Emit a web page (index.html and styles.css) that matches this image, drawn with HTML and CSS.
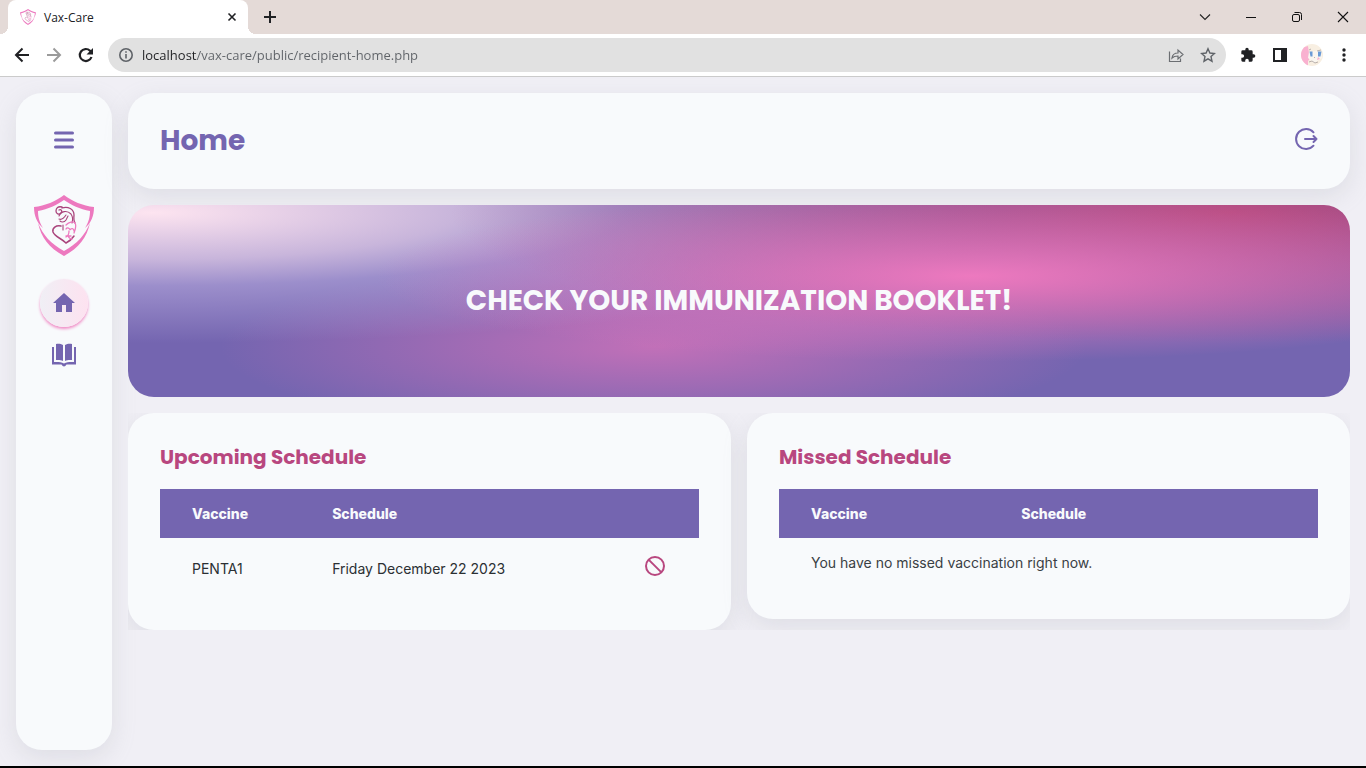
FILE: index.html
```
<!DOCTYPE html>
<html lang="en">
<head>
<meta charset="utf-8">
<title>Vax-Care</title>
<link rel="stylesheet" href="styles.css">
</head>
<body>
<svg class="defs" aria-hidden="true">
  <symbol id="logo" viewBox="0 0 60 61">
    <g fill="none" stroke-linecap="round">
      <path fill="#ed79bf" d="M30 0C22 6 11 11 0 12c0 9 3 16 9 21C5 27 4 21 4 16c10-2 19-6 26-11 7 5 16 9 26 11 0 5-1 11-5 17 6-5 9-12 9-21C49 11 38 6 30 0Z"/>
      <path fill="#ed79bf" d="M4 28c3 14 11 25 26 33 15-8 23-19 26-33-5 12-13 21-26 28C17 49 9 40 4 28Z"/>
      <path stroke="#a9437b" stroke-width="1.300" d="M28 12c-4-1-6 1-6 4s3 4 5 2 0-4-2-3M28 13c6-2 12 1 12 7 0 3-1 5 1 8"/>
      <path stroke="#a9437b" stroke-width="1.100" d="M25 21c2-5 8-6 12-2 2 3 2 6 1 9m-13-4c2 1 5-1 7-4m-6 6c1 1 4 2 6-1l2-4m-5 9v5"/>
      <path stroke="#a9437b" stroke-width="1.500" d="M27 31c-5-1-9 2-8 6 2 5 8 6 13 11 4-2 6-4 8-7"/>
      <path stroke="#ed79bf" stroke-width="1.300" d="M32 30c3-3 7-4 9-2 2 3 0 7-1 10M32 34c1-2 4-1 4 1 1-2 4-2 4 1M32 42c2-1 3-3 3-6m-3 5h5m-3 0c1 2 2 3 4 3"/>
    </g>
  </symbol>
</svg>

<header class="browser">
  <div class="tabstrip">
    <div class="tab">
      <svg class="tab-logo"><use href="#logo"/></svg>
      <span class="tab-title">Vax-Care</span>
      <button class="plain" aria-label="Close tab"><svg width="16" height="16" viewBox="0 0 16 16" stroke="#202124" stroke-width="1.600"><path d="m4.500 4.500 7 7m0-7-7 7"/></svg></button>
    </div>
    <button class="plain new-tab" aria-label="New tab"><svg width="16" height="16" viewBox="0 0 16 16" stroke="#202124" stroke-width="2"><path d="M2 8h12M8 2v12"/></svg></button>
    <div class="window-controls">
      <button class="plain" aria-label="Search tabs"><svg width="12" height="12" viewBox="0 0 12 12" fill="none" stroke="#222" stroke-width="1.100"><path d="m1 3.500 5 5 5-5"/></svg></button>
      <button class="plain" aria-label="Minimize"><svg width="12" height="12" viewBox="0 0 12 12" stroke="#111"><path d="M1 6.500h10"/></svg></button>
      <button class="plain" aria-label="Restore"><svg width="12" height="12" viewBox="0 0 12 12" fill="none" stroke="#111"><rect x="1.500" y="3.500" width="7" height="7" rx="1.500"/><path d="M3.500 1.500H8.500a2 2 0 0 1 2 2V9"/></svg></button>
      <button class="plain" aria-label="Close"><svg width="12" height="12" viewBox="0 0 12 12" stroke="#111" stroke-width="1.100"><path d="m1 1 10 10M11 1 1 11"/></svg></button>
    </div>
  </div>
  <div class="toolbar">
    <button class="plain" aria-label="Back"><svg width="16" height="16" viewBox="0 0 16 16" fill="none" stroke="#202124" stroke-width="2"><path d="M15 8H2m6.500-6.500L2 8l6.500 6.500"/></svg></button>
    <button class="plain" aria-label="Forward"><svg width="16" height="16" viewBox="0 0 16 16" fill="none" stroke="#9b9b9b" stroke-width="2"><path d="M1 8h13M7.500 1.500 14 8l-6.500 6.500"/></svg></button>
    <button class="plain" aria-label="Reload"><svg width="16" height="16" viewBox="0 0 16 16" fill="none" stroke="#202124" stroke-width="2.200"><path d="M13.500 10A6 6 0 1 1 12 3.700L13.500 5"/><path fill="#202124" stroke="none" d="M15 1v6.500H8.500Z"/></svg></button>
    <div class="address">
      <svg width="16" height="16" viewBox="0 0 16 16" fill="none" stroke="#5f6368" stroke-width="1.600"><circle cx="8" cy="8" r="6.200"/><path d="M8 7v4.500M8 4.200v1.600"/></svg>
      <input class="url" type="text" aria-label="Address" value="localhost/vax-care/public/recipient-home.php">
      <button class="plain" aria-label="Share"><svg width="16" height="16" viewBox="0 0 16 16" fill="none" stroke="#6b6e72" stroke-width="1.200"><path d="M1.500 4.500v10h11v-3M4 11c.5-3.500 3-5 6-5V3l5 4.500-5 4.500V9c-2.500 0-4.500.5-6 2Z"/></svg></button>
      <button class="plain" aria-label="Bookmark"><svg width="16" height="16" viewBox="0 0 16 16" fill="none" stroke="#5f6368" stroke-width="1.400"><path d="m8 1.700 1.900 4.300 4.600.5-3.500 3.100 1 4.600L8 11.800l-4 2.400 1-4.600-3.500-3.100 4.600-.5Z"/></svg></button>
    </div>
    <button class="plain" aria-label="Extensions"><svg width="16" height="16" viewBox="0 0 24 24" fill="#202124"><path d="M20.500 11H19V7a2 2 0 0 0-2-2h-4V3.500a2.500 2.500 0 0 0-5 0V5H4a2 2 0 0 0-2 2v3.800h1.500a2.700 2.700 0 0 1 0 5.400H2V20a2 2 0 0 0 2 2h3.800v-1.500a2.700 2.700 0 0 1 5.400 0V22H17a2 2 0 0 0 2-2v-4h1.500a2.500 2.500 0 0 0 0-5Z"/></svg></button>
    <button class="plain" aria-label="Side panel"><svg width="16" height="16" viewBox="0 0 16 16"><path fill="#202124" fill-rule="evenodd" d="M1 1h14v14H1ZM3 3v10h6V3Z"/></svg></button>
    <button class="plain profile" aria-label="Profile"><svg width="22" height="22" viewBox="0 0 22 22"><defs><clipPath id="round"><circle cx="11" cy="11" r="11"/></clipPath></defs><g clip-path="url(#round)"><path fill="#f8efe2" d="M0 0h22v22H0z"/><path fill="#f9b1d0" d="M0 4l7-2 1 7 3 3-4 5v5H0z"/><path fill="#faf6f0" d="M8 8l12-2 1 8-8 5-6-5z"/><path fill="#f9b1d0" d="m17 13 2 2-3 1z"/><path fill="#6a9ad6" d="M8.500 7.500h3v5h-2zM17 7.500h3.500l-1 5H17z"/><path fill="none" stroke="#8d8585" stroke-width=".6" d="M8 6l2-1m6 2 4-1m-12 12 3-1 3 2 3-1m-4-5 1 1"/></g></svg></button>
    <button class="plain" aria-label="Menu"><svg width="16" height="16" viewBox="0 0 16 16" fill="#202124"><circle cx="8" cy="3" r="1.700"/><circle cx="8" cy="8" r="1.700"/><circle cx="8" cy="13" r="1.700"/></svg></button>
  </div>
</header>

<div class="app">
  <nav class="sidebar card" aria-label="Main">
    <button class="plain menu-toggle" aria-label="Toggle menu"><svg width="20" height="18" viewBox="0 0 20 18" stroke="#7465b0" stroke-width="3" stroke-linecap="round"><path d="M1.500 2h17M1.500 9h17M1.500 16h17"/></svg></button>
    <svg class="brand" role="img" aria-label="Vax-Care"><use href="#logo"/></svg>
    <div class="nav-links">
      <a class="nav-link active" href="#home" aria-label="Home"><svg width="24" height="24" viewBox="0 0 24 24" fill="#7465b0"><path d="M12 2 1 12h3v9h6v-7h4v7h6v-9h3Z"/></svg></a>
      <a class="nav-link" href="#booklet" aria-label="Booklet"><svg width="24" height="24" viewBox="0 0 24 24" fill="#7465b0"><path d="M4 1c3-.500 5 0 7 1v16c-2-1-4-1.300-7-1ZM13 2c2-1 4-1.500 7-1v16c-3-.300-5 0-7 1Z"/><path d="M0 4h2v15c4-.300 7 0 10 1.500C15 19 18 18.700 22 19V4h2v17.500h-9.500c-.8 1.300-1.500 2-2.500 2s-1.700-.700-2.500-2H0Z"/></svg></a>
    </div>
  </nav>

  <main class="content">
    <div class="page-header card">
      <h1>Home</h1>
      <button class="plain logout" aria-label="Log out"><svg width="24" height="24" viewBox="0 0 24 24" fill="none" stroke="#7465b0" stroke-width="2" stroke-linecap="round" stroke-linejoin="round"><path d="M19.500 5.300A10 10 0 1 0 19.500 18.700M11 12h11.500M19.500 9l3 3-3 3"/></svg></button>
    </div>
    <a class="banner" href="#booklet">CHECK YOUR IMMUNIZATION BOOKLET!</a>
    <div class="schedules">
      <section class="panel card">
        <h2>Upcoming Schedule</h2>
        <table class="upcoming">
          <colgroup><col class="col-vaccine"><col><col class="col-action"></colgroup>
          <thead><tr><th scope="col">Vaccine</th><th scope="col">Schedule</th><th scope="col"></th></tr></thead>
          <tbody><tr><td>PENTA1</td><td>Friday December 22 2023</td><td class="action"><button class="plain" aria-label="Cancel"><svg width="24" height="24" viewBox="0 0 24 24" fill="none" stroke="#b8477f" stroke-width="2"><circle cx="12" cy="12" r="9"/><path d="m5.600 5.600 12.800 12.800"/></svg></button></td></tr></tbody>
        </table>
      </section>
      <section class="panel card">
        <h2>Missed Schedule</h2>
        <table class="missed">
          <colgroup><col class="col-vaccine"><col></colgroup>
          <thead><tr><th scope="col">Vaccine</th><th scope="col">Schedule</th></tr></thead>
          <tbody><tr><td class="empty" colspan="2">You have no missed vaccination right now.</td></tr></tbody>
        </table>
      </section>
    </div>
  </main>
</div>
</body>
</html>
```
FILE: styles.css
```
* { box-sizing: border-box; }

body {
  margin: 0;
  min-height: 100vh;
  display: flex;
  flex-direction: column;
  background: #f0eff5;
  border-bottom: 2px solid #000;
  font-family: Inter, "Liberation Sans", sans-serif;
  font-size: 14px;
  color: #2b2f33;
}

.defs { display: none; }
svg { display: block; flex: none; }

.plain {
  display: flex;
  align-items: center;
  justify-content: center;
  padding: 0;
  border: 0;
  background: none;
  cursor: pointer;
}

/* Browser frame */
.browser { font-family: "Segoe UI", "Open Sans", sans-serif; }

.tabstrip {
  display: flex;
  align-items: center;
  height: 34px;
  padding-left: 8px;
  background: #e4dad7;
}

.tab {
  position: relative;
  display: flex;
  align-items: center;
  gap: 8px;
  width: 240px;
  height: 34px;
  padding: 0 8px 0 12px;
  border-radius: 8px 8px 0 0;
  background: #fff;
}

.tab::before,
.tab::after {
  content: "";
  position: absolute;
  bottom: 0;
  width: 8px;
  height: 8px;
}
.tab::before { left: -8px; background: radial-gradient(circle at 0 0, transparent 8px, #fff 8px); }
.tab::after { right: -8px; background: radial-gradient(circle at 100% 0, transparent 8px, #fff 8px); }

.tab-logo { width: 16px; height: 16px; }
.tab-title { flex: 1; font-size: 12px; color: #202124; }
.new-tab { margin-left: 14px; }

.window-controls { display: flex; margin-left: auto; height: 28px; }
.window-controls .plain { width: 46px; }

.toolbar {
  display: flex;
  align-items: center;
  gap: 16px;
  height: 43px;
  padding: 0 14px;
  background: #fff;
  border-bottom: 1px solid #cbcbcb;
}

.profile { margin: 0 -3px; }

.address {
  flex: 1;
  display: flex;
  align-items: center;
  gap: 16px;
  height: 34px;
  padding: 0 10px;
  margin: 0 -2px;
  border-radius: 17px;
  background: #e1e1e1;
}

.url {
  flex: 1;
  min-width: 0;
  margin-left: -8px;
  padding: 0;
  border: 0;
  outline: 0;
  font: 13px "Segoe UI", "Open Sans", sans-serif;
  color: transparent;
  background: linear-gradient(90deg, #202124 55px, #5f6368 55px);
  -webkit-background-clip: text;
  background-clip: text;
}

/* Application */
.app {
  flex: 1;
  display: flex;
  gap: 16px;
  padding: 16px;
}

.card {
  border-radius: 26px;
  background: #f8fafc;
  box-shadow: 0 8px 24px rgba(149, 157, 165, 0.2);
}

.sidebar {
  flex: none;
  display: flex;
  flex-direction: column;
  align-items: center;
  width: 96px;
  padding: 32px 16px;
}

.menu-toggle { width: 32px; height: 30px; }
.brand { width: 60px; height: 61px; margin: 40px 0 23px; }

.nav-links { display: grid; gap: 4px; }

.nav-link {
  display: grid;
  place-items: center;
  width: 48px;
  height: 48px;
  border-radius: 50%;
}

.nav-link.active {
  background: linear-gradient(90deg, #f0eff5, #fde2f0);
  box-shadow: 0 2px 3px #f08cc6;
}

.content {
  flex: 1;
  min-width: 0;
  display: flex;
  flex-direction: column;
  gap: 16px;
}

.page-header {
  display: flex;
  align-items: center;
  justify-content: space-between;
  height: 96px;
  padding: 0 32px;
}

.logout { padding-bottom: 4px; }

h1, h2, .banner { font-family: Poppins, Inter, sans-serif; font-weight: 700; }

h1 { margin: 0; font-size: 28px; color: #7465b0; }

.banner {
  display: grid;
  place-items: center;
  height: 192px;
  padding: 0 32px;
  border-radius: 26px;
  font-size: 28px;
  color: #f8fafc;
  text-align: center;
  text-decoration: none;
  background:
    radial-gradient(at 69% 37%, #ed79bf 0, transparent 50%),
    radial-gradient(at 90% 4%, #b54a7e 0, transparent 50%),
    radial-gradient(at 2% 4%, #fde4f0 0, #c8b5db 18%, rgba(173, 160, 215, 0.7) 28%, transparent 50%),
    radial-gradient(at 43% 74%, #c170b8 0, transparent 44%),
    #7465b0;
}

.schedules {
  display: grid;
  grid-template-columns: 1fr 1fr;
  align-items: start;
  gap: 16px;
  overflow: hidden;
}

.panel { padding: 32px; }

h2 { margin: 0 0 20px; font-size: 20px; line-height: 24px; color: #b8477f; }

table {
  width: 100%;
  table-layout: fixed;
  border-collapse: collapse;
  line-height: 17px;
}

.upcoming .col-vaccine { width: 26%; }
.upcoming .col-action { width: 16%; }
.missed .col-vaccine { width: 39%; }

th, td { padding: 16px 0 16px 32px; text-align: left; }
th { height: 49px; background: #7465b0; color: #f8fafc; font-weight: 800; }
td { vertical-align: middle; }
.action { padding: 16px 32px 20px; }
.action .plain { margin: 0 -2px; }
.empty { color: #3a3f44; }
```
